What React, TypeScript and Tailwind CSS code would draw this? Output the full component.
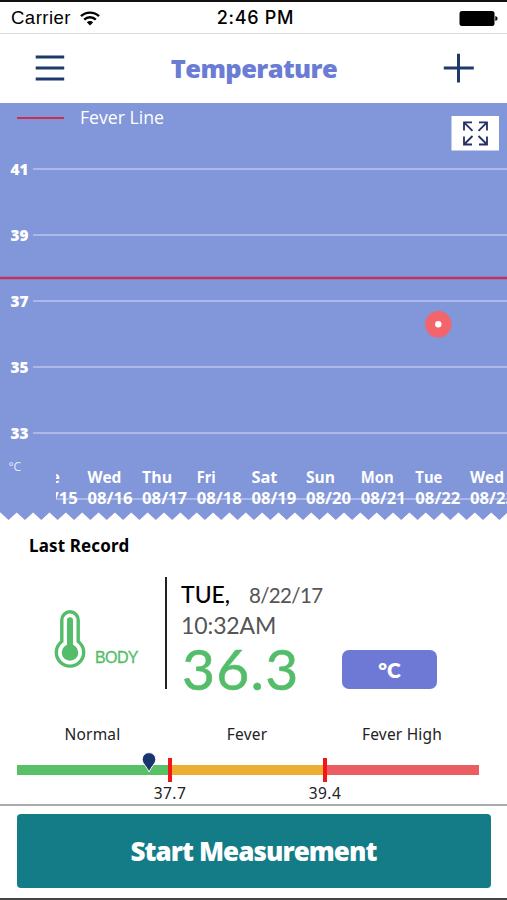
const ticks = [41, 39, 37, 35, 33];

const days = [
  { day: "Tue", date: "08/15", dayWidth: 27 },
  { day: "Wed", date: "08/16", dayWidth: 34 },
  { day: "Thu", date: "08/17", dayWidth: 30 },
  { day: "Fri", date: "08/18", dayWidth: 19 },
  { day: "Sat", date: "08/19", dayWidth: 26 },
  { day: "Sun", date: "08/20", dayWidth: 29 },
  { day: "Mon", date: "08/21", dayWidth: 33 },
  { day: "Tue", date: "08/22", dayWidth: 27 },
  { day: "Wed", date: "08/23", dayWidth: 34 },
];

const DAY_STEP = 54.65;
const TOOTH = 16.36;

// torn paper edge along the bottom of the chart
const edge = Array.from({ length: 32 }, (_, i) => {
  const x = 0.4 + i * TOOTH;
  return `L${x.toFixed(2)} 409.5 L${(x + TOOTH / 2).toFixed(2)} 417`;
}).join(" ");

const StatusBar = () => (
  <div className="flex h-[34px] items-center border-t-2 border-b border-t-[#111] border-b-[#dcdcdc] pt-px pr-[9px] pl-[11px] text-black">
    <div className="flex flex-1 items-center gap-2">
      <span className="w-[61px] font-['Liberation_Sans',sans-serif] text-[18.5px] leading-none tracking-[0.5px]">
        Carrier
      </span>
      <svg width="20" height="15" viewBox="0 0 20 15" fill="none">
        <path d="M1 5.2a13 13 0 0 1 18 0" stroke="#000" strokeWidth="2.4" />
        <path d="M4.2 8.6a8.4 8.4 0 0 1 11.6 0" stroke="#000" strokeWidth="2.4" />
        <path d="M6.8 11.3a4.6 4.6 0 0 1 6.4 0L10 14.6z" fill="#000" />
      </svg>
    </div>
    <span className="pl-[2px] font-['Inter',sans-serif] text-[18px] leading-none font-medium tracking-[0.7px]">
      2:46 PM
    </span>
    <div className="flex flex-1 justify-end">
      <svg width="39" height="15" viewBox="0 0 39 15">
        <rect x="0.5" y="0" width="35" height="15" rx="2.5" fill="#000" />
        <path d="M36.3 5c3 .8 3 4.2 0 5z" fill="#000" />
      </svg>
    </div>
  </div>
);

const Header = () => (
  <header className="flex h-[69px] items-center justify-between pr-[33px] pb-[2px] pl-[35px]">
    <button aria-label="Menu">
      <svg width="30" height="28" viewBox="0 0 30 28" stroke="#1d3a6b" strokeWidth="3">
        <path d="M0.7 3h28.5M0.7 14h28.5M0.7 25h28.5" />
      </svg>
    </button>
    <h1 className="pt-[3px] font-['Open_Sans',sans-serif] text-[25.5px] leading-none font-extrabold tracking-[-0.6px] text-[#6a7cd3]">
      Temperature
    </h1>
    <button aria-label="Add">
      <svg width="31" height="30" viewBox="0 0 31 30" stroke="#1d3a6b" strokeWidth="3">
        <path d="M0.8 15h30M15.5 0.8v28.6" />
      </svg>
    </button>
  </header>
);

const Chart = () => (
  <svg
    className="block h-[417px] w-[507px] font-['Open_Sans',sans-serif]"
    viewBox="0 0 507 417"
  >
    <defs>
      <clipPath id="plot">
        <rect x="56" y="0" width="451" height="417" />
      </clipPath>
    </defs>
    <path d={`M0 0V409.5 ${edge} V0z`} fill="#8296da" />

    <path d="M17 15H64" stroke="#cf2c50" strokeWidth="2" />
    <text
      x="80"
      y="21"
      fontSize="17.5"
      fontWeight="500"
      fill="#fff"
      textLength="84"
      lengthAdjust="spacingAndGlyphs"
    >
      Fever Line
    </text>

    {ticks.map((t, i) => (
      <g key={t}>
        <text
          x="10.5"
          y={71.6 + i * 66}
          fontSize="15.5"
          fontWeight="800"
          fill="#fff"
          textLength="18"
          lengthAdjust="spacingAndGlyphs"
        >
          {t}
        </text>
        <path d={`M33 ${66 + i * 66}H507`} stroke="#b9c4ec" strokeWidth="1.6" />
      </g>
    ))}
    <path d="M0 175H507" stroke="#c4335f" strokeWidth="2.4" />

    <circle cx="438.3" cy="221.3" r="13.2" fill="#f4646b" />
    <circle cx="438.3" cy="221.3" r="3.2" fill="#fff" />

    <text x="8.5" y="368" fontSize="12" fill="#e6eafa" textLength="12.5">
      °C
    </text>

    <g clipPath="url(#plot)" fill="#fff" fontSize="16" fontWeight="700">
      <path d="M56 396H507" stroke="#b9c4ec" strokeWidth="1.6" />
      {days.map((d, i) => (
        <g key={d.date}>
          <text
            x={32.8 + i * DAY_STEP}
            y="379.9"
            textLength={d.dayWidth}
            lengthAdjust="spacingAndGlyphs"
          >
            {d.day}
          </text>
          <text
            x={32.8 + i * DAY_STEP}
            y="400.6"
            textLength="45"
            lengthAdjust="spacingAndGlyphs"
          >
            {d.date}
          </text>
        </g>
      ))}
    </g>

    <rect x="451.5" y="13" width="47.5" height="34.5" fill="#fff" />
    <g stroke="#232f66" strokeWidth="1.8" fill="none">
      <path d="M464 27.5V19.3h8M464.5 19.8l8 8" />
      <path d="M479 19.3h8v8.2M486.5 19.8l-8 8" />
      <path d="M464 33.5V41.5h8M464.5 41l8-8" />
      <path d="M479 41.5h8v-8M486.5 41l-8-8" />
    </g>
  </svg>
);

const LastRecord = () => (
  <section className="h-[197px] font-['Lato',sans-serif]">
    <h2 className="pt-[16px] pl-[29px] font-['Noto_Sans',sans-serif] text-[17px] leading-[20px] font-bold tracking-[0.15px] text-black">
      Last Record
    </h2>
    <div className="mt-[21px] flex">
      <div className="flex w-[165px] items-end pb-[26px] pl-[54px] text-[#54bd69]">
        <svg className="mb-px" width="32" height="58" viewBox="0 0 32 58">
          <path
            d="M7.8 31.5V10a8.2 8.2 0 0 1 16.4 0v21.5a13.7 13.7 0 1 1-16.4 0z"
            fill="none"
            stroke="#54bd69"
            strokeWidth="3.4"
          />
          <circle cx="16" cy="42.5" r="8.3" fill="#54bd69" />
          <path d="M16 10.2V40" stroke="#54bd69" strokeWidth="6" strokeLinecap="round" />
        </svg>
        <span className="mb-[3px] ml-[9px] font-['Liberation_Sans',sans-serif] text-[16px] leading-[17px] tracking-[-0.6px] [-webkit-text-stroke:0.3px]">
          BODY
        </span>
      </div>
      <div className="h-[112px] w-[2px] bg-[#222]" />
      <div className="w-[175px] pl-[14px] whitespace-nowrap">
        <div className="flex items-baseline pt-[4px] leading-[26px]">
          <span className="w-[68px] text-[23px] font-medium text-black">TUE,</span>
          <span className="text-[20.5px] tracking-[-0.65px] text-[#555]">8/22/17</span>
        </div>
        <div className="mt-[3px] text-[23px] leading-[28px] tracking-[-0.1px] text-[#555]">
          10:32AM
        </div>
        <div className="mt-[2px] ml-px text-[57px] leading-[54px] tracking-[1.2px] text-[#54bd69] [-webkit-text-stroke:0.6px]">
          36.3
        </div>
      </div>
      <button className="mt-[73px] h-[39px] w-[95px] rounded-[7px] bg-[#6e78d5] text-[21px] leading-none font-extrabold text-white">
        °C
      </button>
    </div>
  </section>
);

const Scale = () => (
  <section className="h-[89px] border-b-2 border-[#aaa] pl-[17px] font-['Noto_Sans',sans-serif] text-[15.5px] leading-[20px] text-[#222]">
    <div className="flex pt-[7px] text-center tracking-[0.2px]">
      <span className="w-[151px]">Normal</span>
      <span className="w-[158px]">Fever</span>
      <span className="w-[152px]">Fever High</span>
    </div>
    <div className="relative mt-[14px] flex h-[24px] items-center">
      <div className="h-[10px] w-[151px] bg-[#58c168]" />
      <div className="h-[24px] w-[4px] bg-[#f31616]" />
      <div className="h-[10px] w-[151px] bg-[#ebad32]" />
      <div className="h-[24px] w-[4px] bg-[#f31616]" />
      <div className="h-[10px] w-[152px] bg-[#e95d63]" />
      <svg
        className="absolute top-[-6px] left-[124px]"
        width="16"
        height="22"
        viewBox="0 0 16 22"
      >
        <path
          d="M8 20C6 15 1.2 11.5 1.2 7.4a6.8 6.8 0 0 1 13.6 0C14.8 11.5 10 15 8 20z"
          fill="#18356d"
          stroke="#fff"
          strokeWidth="1"
        />
      </svg>
    </div>
    <div className="mt-px flex text-center tracking-[0.4px]">
      <span className="ml-[133px] w-[40px]">37.7</span>
      <span className="ml-[115px] w-[40px]">39.4</span>
    </div>
  </section>
);

export default function App() {
  return (
    <div className="flex h-[900px] w-[507px] flex-col overflow-hidden border-b-2 border-[#444] bg-white">
      <StatusBar />
      <Header />
      <Chart />
      <LastRecord />
      <Scale />
      <button className="mx-auto mt-[8px] h-[74px] w-[474px] rounded-[4px] bg-[#137c87] font-['Open_Sans',sans-serif] text-[26px] leading-none font-extrabold tracking-[-0.95px] text-white">
        Start Measurement
      </button>
    </div>
  );
}
